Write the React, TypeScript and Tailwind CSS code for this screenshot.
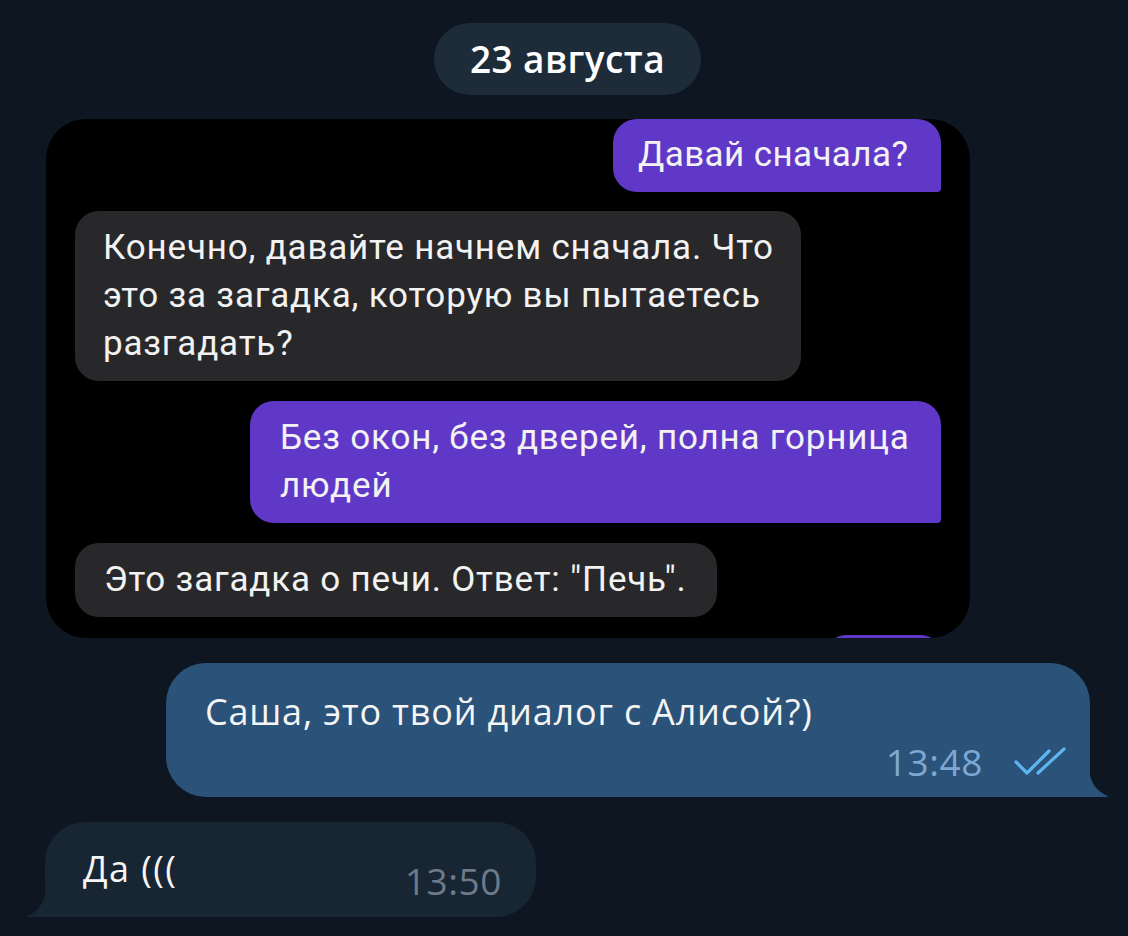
import React from "react";

const tg = { fontFamily: '"Open Sans", "Noto Sans", sans-serif' };
const ios = { fontFamily: 'Roboto, "Liberation Sans", sans-serif' };

export default function App() {
  return (
    <div className="w-[1128px] h-[936px] bg-[#0e1621] overflow-hidden flex flex-col" style={tg}>
      {/* date pill */}
      <div className="pt-[23px] pl-[434px]">
        <div className="w-[267px] h-[72px] rounded-full bg-[#1e2c3a] flex items-center justify-center text-white text-[37px] tracking-[0.4px] font-semibold">
          23 августа
        </div>
      </div>

      {/* embedded screenshot */}
      <div className="mt-[24px] ml-[46px] w-[924px] h-[519px] bg-black rounded-[40px] overflow-hidden" style={ios}>
        <div className="flex flex-col gap-[20px] px-[29px] text-[35px] leading-[48px] text-[#f2f2f2] tracking-[0.8px]">
          <div className="self-end w-[328px] h-[73px] bg-[#5f38c7] rounded-[24px] rounded-br-[4px] pl-[25px] py-[12px] tracking-[0.4px]">
            Давай сначала?
          </div>
          <div className="self-start -mt-[1px] w-[726px] bg-[#28282a] rounded-[24px] pl-[28px] py-[13px]">
            Конечно, давайте начнем сначала. Что
            <br />
            это за загадка, которую вы пытаетесь
            <br />
            разгадать?
          </div>
          <div className="self-end w-[691px] bg-[#5f38c7] rounded-[24px] rounded-br-[4px] pl-[30px] py-[13px]">
            Без окон, без дверей, полна горница
            <br />
            людей
          </div>
          <div className="self-start w-[642px] h-[74px] bg-[#28282a] rounded-[24px] pl-[29px] py-[13px]">
            Это загадка о печи. Ответ: "Печь".
          </div>
          <div className="self-end -mt-[2px] w-[115px] h-[40px] bg-[#5f38c7] rounded-[24px]" />
        </div>
      </div>

      {/* outgoing telegram bubble */}
      <div className="relative mt-[25px] ml-[166px] w-[924px] h-[134px] bg-[#2b5278] rounded-[40px] rounded-br-none flex flex-col pl-[39px] pr-[23px] pt-[26px]">
        <div className="text-[36px] leading-[46px] tracking-[0.8px] text-[#f5f5f5]">Саша, это твой диалог с Алисой?)</div>
        <div className="mt-[4px] flex items-center justify-end h-[46px]">
          <span className="text-[37px] leading-[46px] tracking-[0.6px] text-[#7da8d3]">13:48</span>
          <svg className="ml-[30px]" width="54" height="30" viewBox="0 0 54 30" fill="none">
            <path d="M3 15 L14 26 L36 4" stroke="#5fb4f1" strokeWidth="3.2" strokeLinecap="round" strokeLinejoin="round" />
            <path d="M25 26 L51 2" stroke="#5fb4f1" strokeWidth="3.2" strokeLinecap="round" />
          </svg>
        </div>
        <svg className="absolute right-[-18px] bottom-0" width="19" height="32" viewBox="0 0 19 32">
          <path d="M0 0 C0 14 5 25 18.5 31 L18.5 32 L0 32 Z" fill="#2b5278" />
        </svg>
      </div>

      {/* incoming telegram bubble */}
      <div className="relative mt-[25px] ml-[45px] w-[491px] h-[95px] bg-[#182533] rounded-[40px] rounded-bl-none flex items-start pl-[38px] pr-[34px] pt-[24px]">
        <div className="text-[36px] leading-[46px] tracking-[1.4px] text-[#f5f5f5]">Да (((</div>
        <div className="ml-auto pt-[12px] text-[37px] leading-[46px] tracking-[0.6px] text-[#6c7a89]">13:50</div>
        <svg className="absolute left-[-18px] bottom-0" width="19" height="32" viewBox="0 0 19 32">
          <path d="M19 0 C19 14 14 25 0.5 31 L0.5 32 L19 32 Z" fill="#182533" />
        </svg>
      </div>
    </div>
  );
}
